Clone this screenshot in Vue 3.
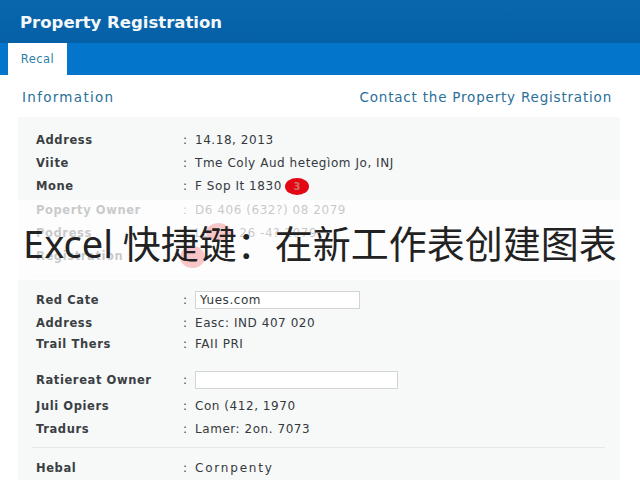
<script setup>
const topRows = [
  { label: 'Address', value: '14.18, 2013' },
  { label: 'Viite', value: 'Tme Coly Aud hetegìom Jo, INJ' },
  { label: 'Mone', value: 'F Sop It 1830', badge: '3' },
  { label: 'Poperty Owner', value: 'D6 406 (632?) 08 2079' },
  { label: 'Podress', value: 'Lon n, 26 -4? 2079', badge: '2' },
  { label: 'Registration', value: '', badge: ' ' },
];

const bottomRows = [
  { label: 'Red Cate', input: 'Yues.com', size: 'short' },
  { label: 'Address', value: 'Easc: IND 407 020' },
  { label: 'Trail Thers', value: 'FAII PRI', compact: true },
  { label: 'Ratiereat Owner', input: '', size: 'long', gap: true },
  { label: 'Juli Opiers', value: 'Con (412, 1970' },
  { label: 'Tradurs', value: 'Lamer: 2on. 7073' },
];
</script>

<template>
  <div class="page">
    <header class="title-bar">Property Registration</header>
    <nav class="tabs">
      <span class="tab">Recal</span>
    </nav>

    <div class="section-head">
      <span class="info">Information</span>
      <a>Contact the Property Registration</a>
    </div>

    <section class="panel">
      <div class="block block-top">
        <div v-for="row in topRows" :key="row.label" class="row">
          <span class="label">{{ row.label }}</span>
          <span class="colon">:</span>
          <span class="value">
            {{ row.value }}
            <i v-if="row.badge" class="badge" :class="{ faded: row.label !== 'Mone' }">{{ row.badge }}</i>
          </span>
        </div>
      </div>

      <div class="block block-bottom">
        <div
          v-for="row in bottomRows"
          :key="row.label"
          class="row"
          :class="{ spaced: row.gap, compact: row.compact }"
        >
          <span class="label">{{ row.label }}</span>
          <span class="colon">:</span>
          <span v-if="row.size" class="field" :class="row.size">{{ row.input }}</span>
          <span v-else class="value">{{ row.value }}</span>
        </div>
        <div class="row last">
          <span class="label">Hebal</span>
          <span class="colon">:</span>
          <span class="value wide">Cornpenty</span>
        </div>
      </div>
    </section>

    <div class="banner">Excel 快捷键：在新工作表创建图表</div>
  </div>
</template>

<style scoped>
.page {
  position: relative;
  width: 640px;
  height: 480px;
  overflow: hidden;
  background: #fff;
  font-family: "DejaVu Sans", "Open Sans", sans-serif;
  color: #2b2f33;
}

.title-bar {
  height: 43px;
  box-sizing: border-box;
  padding: 11px 0 0 20px;
  background: linear-gradient(#0a66ad, #0560a6);
  color: #f4f8fb;
  font-size: 16.5px;
  line-height: 23px;
  font-weight: 700;
}

.tabs {
  height: 32px;
  padding-left: 8px;
  background: #0376cc;
}

.tab {
  display: block;
  width: 59px;
  height: 32px;
  background: #fff;
  color: #2d7fa8;
  font-size: 11.5px;
  line-height: 32px;
  letter-spacing: 0.5px;
  text-align: center;
}

.section-head {
  display: flex;
  justify-content: space-between;
  height: 42px;
  box-sizing: border-box;
  padding: 12px 28px 0 22px;
  color: #2a7099;
  font-size: 13.5px;
  line-height: 20px;
  letter-spacing: 0.8px;
}

.info {
  letter-spacing: 1.3px;
}

.panel {
  margin: 0 20px 0 18px;
  background: #f7f8f8;
}

.block {
  padding: 0 15px 0 14px;
}

.block-top {
  height: 163px;
  box-sizing: border-box;
  padding-top: 11.4px;
}

.block-top .row {
  height: 23.2px;
}

.block-top::after {
  content: "";
  display: block;
  margin-top: 8px;
  border-top: 1px solid #eceeee;
}

.block-bottom {
  padding-top: 8.5px;
}

.row {
  display: flex;
  align-items: center;
  height: 23px;
  padding-left: 4px;
  font-size: 12px;
  letter-spacing: 0.55px;
}

.label {
  width: 147px;
  font-size: 11.5px;
  font-weight: 700;
  color: #3a3f43;
  letter-spacing: 0.6px;
  white-space: nowrap;
}

.colon {
  width: 12px;
  color: #44494d;
}

.value {
  display: flex;
  align-items: center;
  white-space: pre;
  color: #34393d;
}

.wide {
  letter-spacing: 1.8px;
}

.badge {
  display: inline-block;
  width: 24px;
  height: 17px;
  margin-left: -1px;
  border-radius: 50%;
  background: #e30613;
  color: #d0716b;
  font-size: 10px;
  font-style: normal;
  font-weight: 700;
  line-height: 17px;
  text-align: center;
}

.badge.faded {
  position: absolute;
  left: 180px;
  top: 246px;
  width: 25px;
  height: 22px;
  margin: 0;
  background: #e8323c;
}

.row:nth-child(5) .badge.faded {
  left: 206px;
  top: 223px;
  height: 18px;
}

.compact {
  height: 19px;
}

.spaced {
  height: 26px;
  margin-top: 13.5px;
  margin-bottom: 1.5px;
}

.field {
  box-sizing: border-box;
  height: 18px;
  padding-left: 4px;
  border: 1px solid #d3d5d5;
  background: #fff;
  color: #34393d;
  line-height: 16px;
}

.short {
  width: 165px;
}

.long {
  width: 203px;
}

.last {
  height: 40px;
  margin-top: 6.5px;
  border-top: 1px solid #e6e8e8;
}

.banner {
  position: absolute;
  left: 0;
  right: 0;
  top: 200px;
  height: 80px;
  box-sizing: border-box;
  padding: 20px 0 0 23px;
  background: rgba(255, 255, 255, 0.72);
  color: #222;
  font-family: "Noto Sans", "Noto Sans CJK SC", sans-serif;
  font-size: 38px;
  line-height: 46px;
  white-space: nowrap;
}
</style>
